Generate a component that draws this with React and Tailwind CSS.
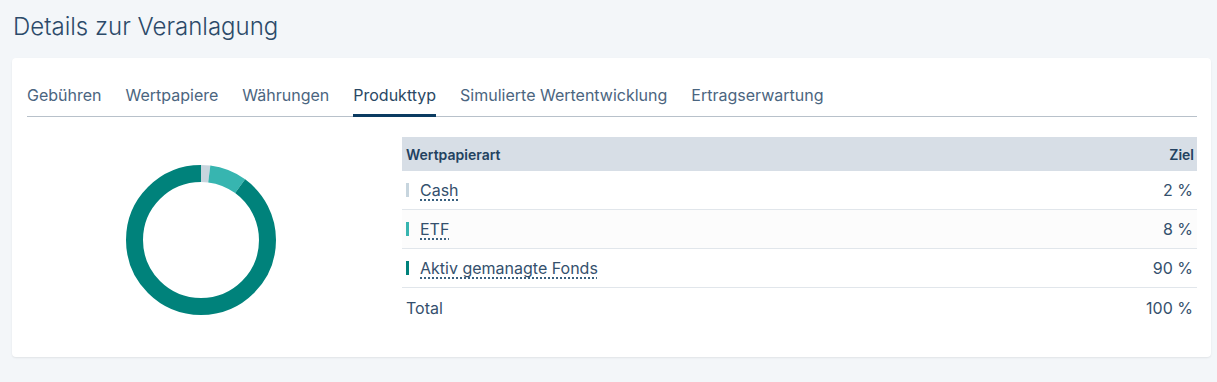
const tabs = [
  "Gebühren",
  "Wertpapiere",
  "Währungen",
  "Produkttyp",
  "Simulierte Wertentwicklung",
  "Ertragserwartung",
];

const rows = [
  { label: "Cash", value: "2 %", pct: 2, color: "#c7d5de" },
  { label: "ETF", value: "8 %", pct: 8, color: "#37b5b0" },
  { label: "Aktiv gemanagte Fonds", value: "90 %", pct: 90, color: "#00827b" },
];

const Donut = () => {
  const r = 66.5;
  const c = 2 * Math.PI * r;
  let offset = 0;
  return (
    <svg width="150" height="150" viewBox="0 0 150 150">
      <g transform="rotate(-90 75 75)">
        {rows.map((row) => {
          const len = (row.pct / 100) * c;
          const el = (
            <circle
              key={row.label}
              cx="75"
              cy="75"
              r={r}
              fill="none"
              stroke={row.color}
              strokeWidth="17"
              strokeDasharray={`${len} ${c - len}`}
              strokeDashoffset={-offset}
            />
          );
          offset += len;
          return el;
        })}
      </g>
    </svg>
  );
};

export default function App() {
  return (
    <div className="min-h-[382px] bg-[#f3f6f9] pl-3 pr-[6px] pt-[9px] pb-6 font-['Inter',sans-serif] text-[#34506d]">
      <h1 className="pl-px text-[24px] leading-[36px] font-light text-[#2c4a69]">Details zur Veranlagung</h1>

      <div className="mt-[13px] rounded bg-white pl-[15px] pr-[14px] pt-[25px] pb-[30px] shadow-[0_1px_2px_rgba(0,0,0,0.08)]">
        <div className="flex gap-6 border-b border-[#b8c1ca]">
          {tabs.map((t) => (
            <div
              key={t}
              className={`pb-[7px] text-[16px] leading-6 border-b-[3px] -mb-px ${
                t === "Produkttyp" ? "border-[#0b3b61] text-[#2a4864]" : "border-transparent text-[#4b6580]"
              }`}
            >
              {t}
            </div>
          ))}
        </div>

        <div className="mt-[20px] flex gap-[27px]">
          <div className="flex w-[348px] justify-center pt-[28px]">
            <Donut />
          </div>

          <div className="flex-1 text-[16px]">
            <div className="flex h-[34px] items-center justify-between bg-[#d7dee6] pl-1 pr-[3px] text-[14px] font-semibold text-[#234260]">
              <span>Wertpapierart</span>
              <span>Ziel</span>
            </div>
            {rows.map((row, i) => (
              <div
                key={row.label}
                className={`flex h-[39px] items-center justify-between border-b border-[#e1e6eb] pl-1 pr-1 ${
                  i === 1 ? "bg-[#fcfcfc]" : ""
                }`}
              >
                <div className="flex items-center">
                  <span className="h-[14px] w-[3px]" style={{ backgroundColor: row.color }} />
                  <span className="ml-[11px] underline decoration-dotted decoration-[#0b3b61] underline-offset-[4px]">
                    {row.label}
                  </span>
                </div>
                <span>{row.value}</span>
              </div>
            ))}
            <div className="flex h-[39px] items-center justify-between pl-1 pr-1">
              <span>Total</span>
              <span>100 %</span>
            </div>
          </div>
        </div>
      </div>
    </div>
  );
}
